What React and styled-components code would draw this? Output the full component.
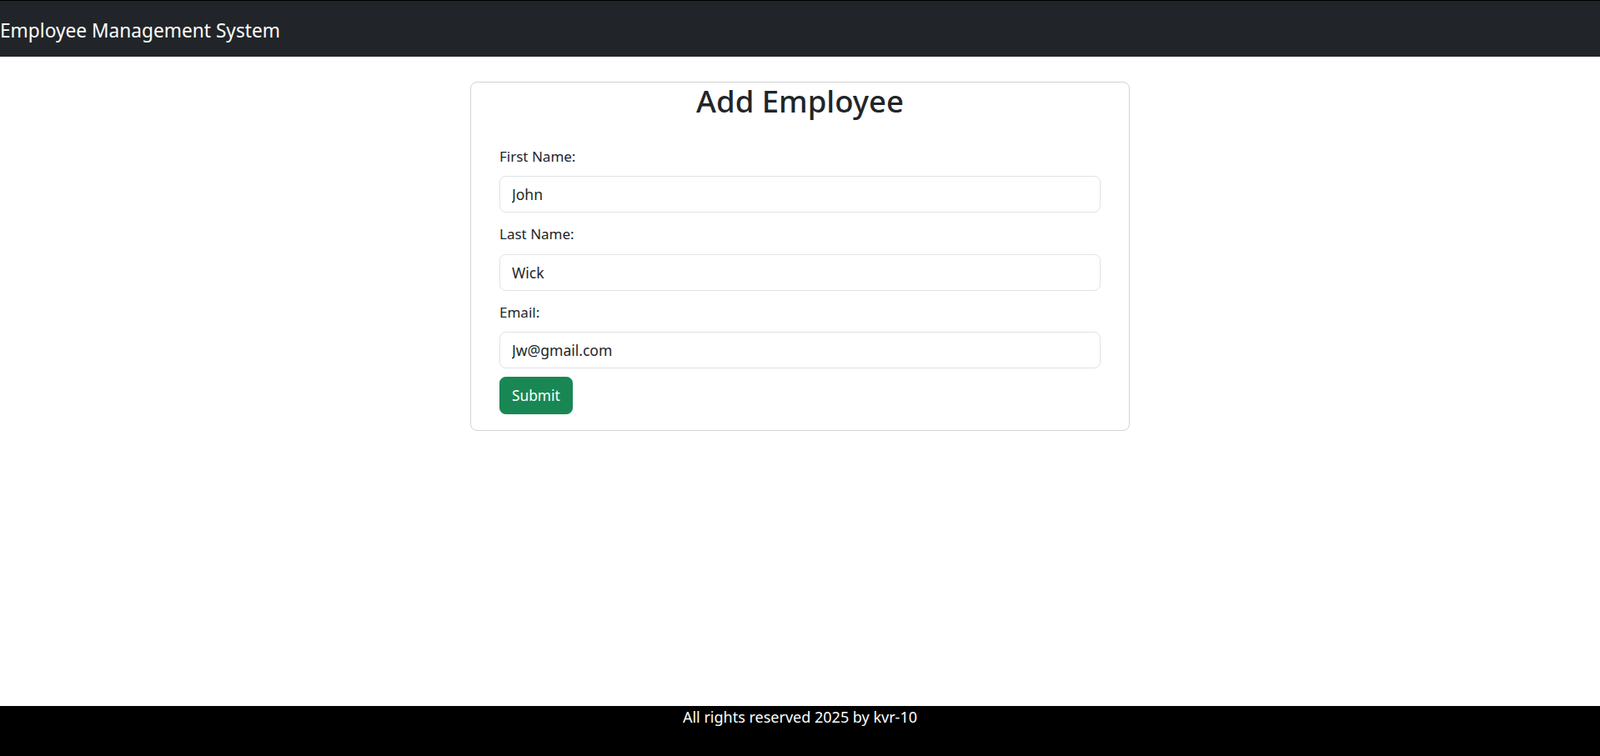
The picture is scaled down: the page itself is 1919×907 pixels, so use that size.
import React, { useState } from 'react';
import styled, { createGlobalStyle } from 'styled-components';

const GlobalStyle = createGlobalStyle`
    * {
        box-sizing: border-box;
    }

    body {
        margin: 0;
        font-family: "Noto Sans", "Open Sans", sans-serif;
        color: #212529;
        background: #fff;
    }
`;

const Page = styled.div`
    min-height: 100vh;
    display: flex;
    flex-direction: column;
`;

const NavBar = styled.nav`
    height: 68px;
    display: flex;
    align-items: center;
    padding-top: 6px;
    background: #212529;
    border-top: 1px solid #000;
`;

const Brand = styled.span`
    color: #fff;
    font-size: 22.7px;
    line-height: 1.5;
    white-space: nowrap;
`;

const Main = styled.main`
    flex: 1;
    padding-top: 30px;
`;

const Card = styled.section`
    width: 791px;
    margin: 0 auto;
    padding: 1px 34px 19px;
    border: 1px solid rgba(0, 0, 0, 0.175);
    border-radius: 8px;
`;

const Title = styled.h2`
    margin: 0 0 31px;
    text-align: center;
    font-size: 36.5px;
    font-weight: 500;
    line-height: 1.2;
`;

const FormGroup = styled.div`
    & + & {
        margin-top: 13px;
    }
`;

const Label = styled.label`
    display: block;
    margin-bottom: 11px;
    font-size: 17px;
    line-height: 1.5;
`;

const Input = styled.input`
    display: block;
    width: 100%;
    height: 44px;
    padding: 0 14px;
    font-family: inherit;
    font-size: 17.5px;
    color: #212529;
    border: 1px solid #dee2e6;
    border-radius: 7.5px;
    outline: none;
`;

const SubmitButton = styled.button`
    height: 45px;
    margin-top: 10px;
    padding: 0 14px;
    font-family: inherit;
    font-size: 17.3px;
    color: #fff;
    background: #198754;
    border: 1px solid #198754;
    border-radius: 7.5px;
    cursor: pointer;
`;

const Footer = styled.footer`
    height: 60px;
    background: #000;
    color: #fff;
    text-align: center;
    font-size: 18px;
    line-height: 1.5;
`;

const fields = [
    { id: 'firstName', label: 'First Name:', type: 'text', value: 'John' },
    { id: 'lastName', label: 'Last Name:', type: 'text', value: 'Wick' },
    { id: 'email', label: 'Email:', type: 'email', value: 'Jw@gmail.com' },
];

export default function App() {
    const [values, setValues] = useState(
        Object.fromEntries(fields.map((f) => [f.id, f.value]))
    );

    const handleChange = (e) => {
        setValues({ ...values, [e.target.name]: e.target.value });
    };

    return (
        <Page>
            <GlobalStyle />
            <NavBar>
                <Brand>Employee Management System</Brand>
            </NavBar>
            <Main>
                <Card>
                    <Title>Add Employee</Title>
                    <form onSubmit={(e) => e.preventDefault()}>
                        {fields.map((f) => (
                            <FormGroup key={f.id}>
                                <Label htmlFor={f.id}>{f.label}</Label>
                                <Input
                                    type={f.type}
                                    id={f.id}
                                    name={f.id}
                                    value={values[f.id]}
                                    onChange={handleChange}
                                />
                            </FormGroup>
                        ))}
                        <SubmitButton type="submit">Submit</SubmitButton>
                    </form>
                </Card>
            </Main>
            <Footer>All rights reserved 2025 by kvr-10</Footer>
        </Page>
    );
}
